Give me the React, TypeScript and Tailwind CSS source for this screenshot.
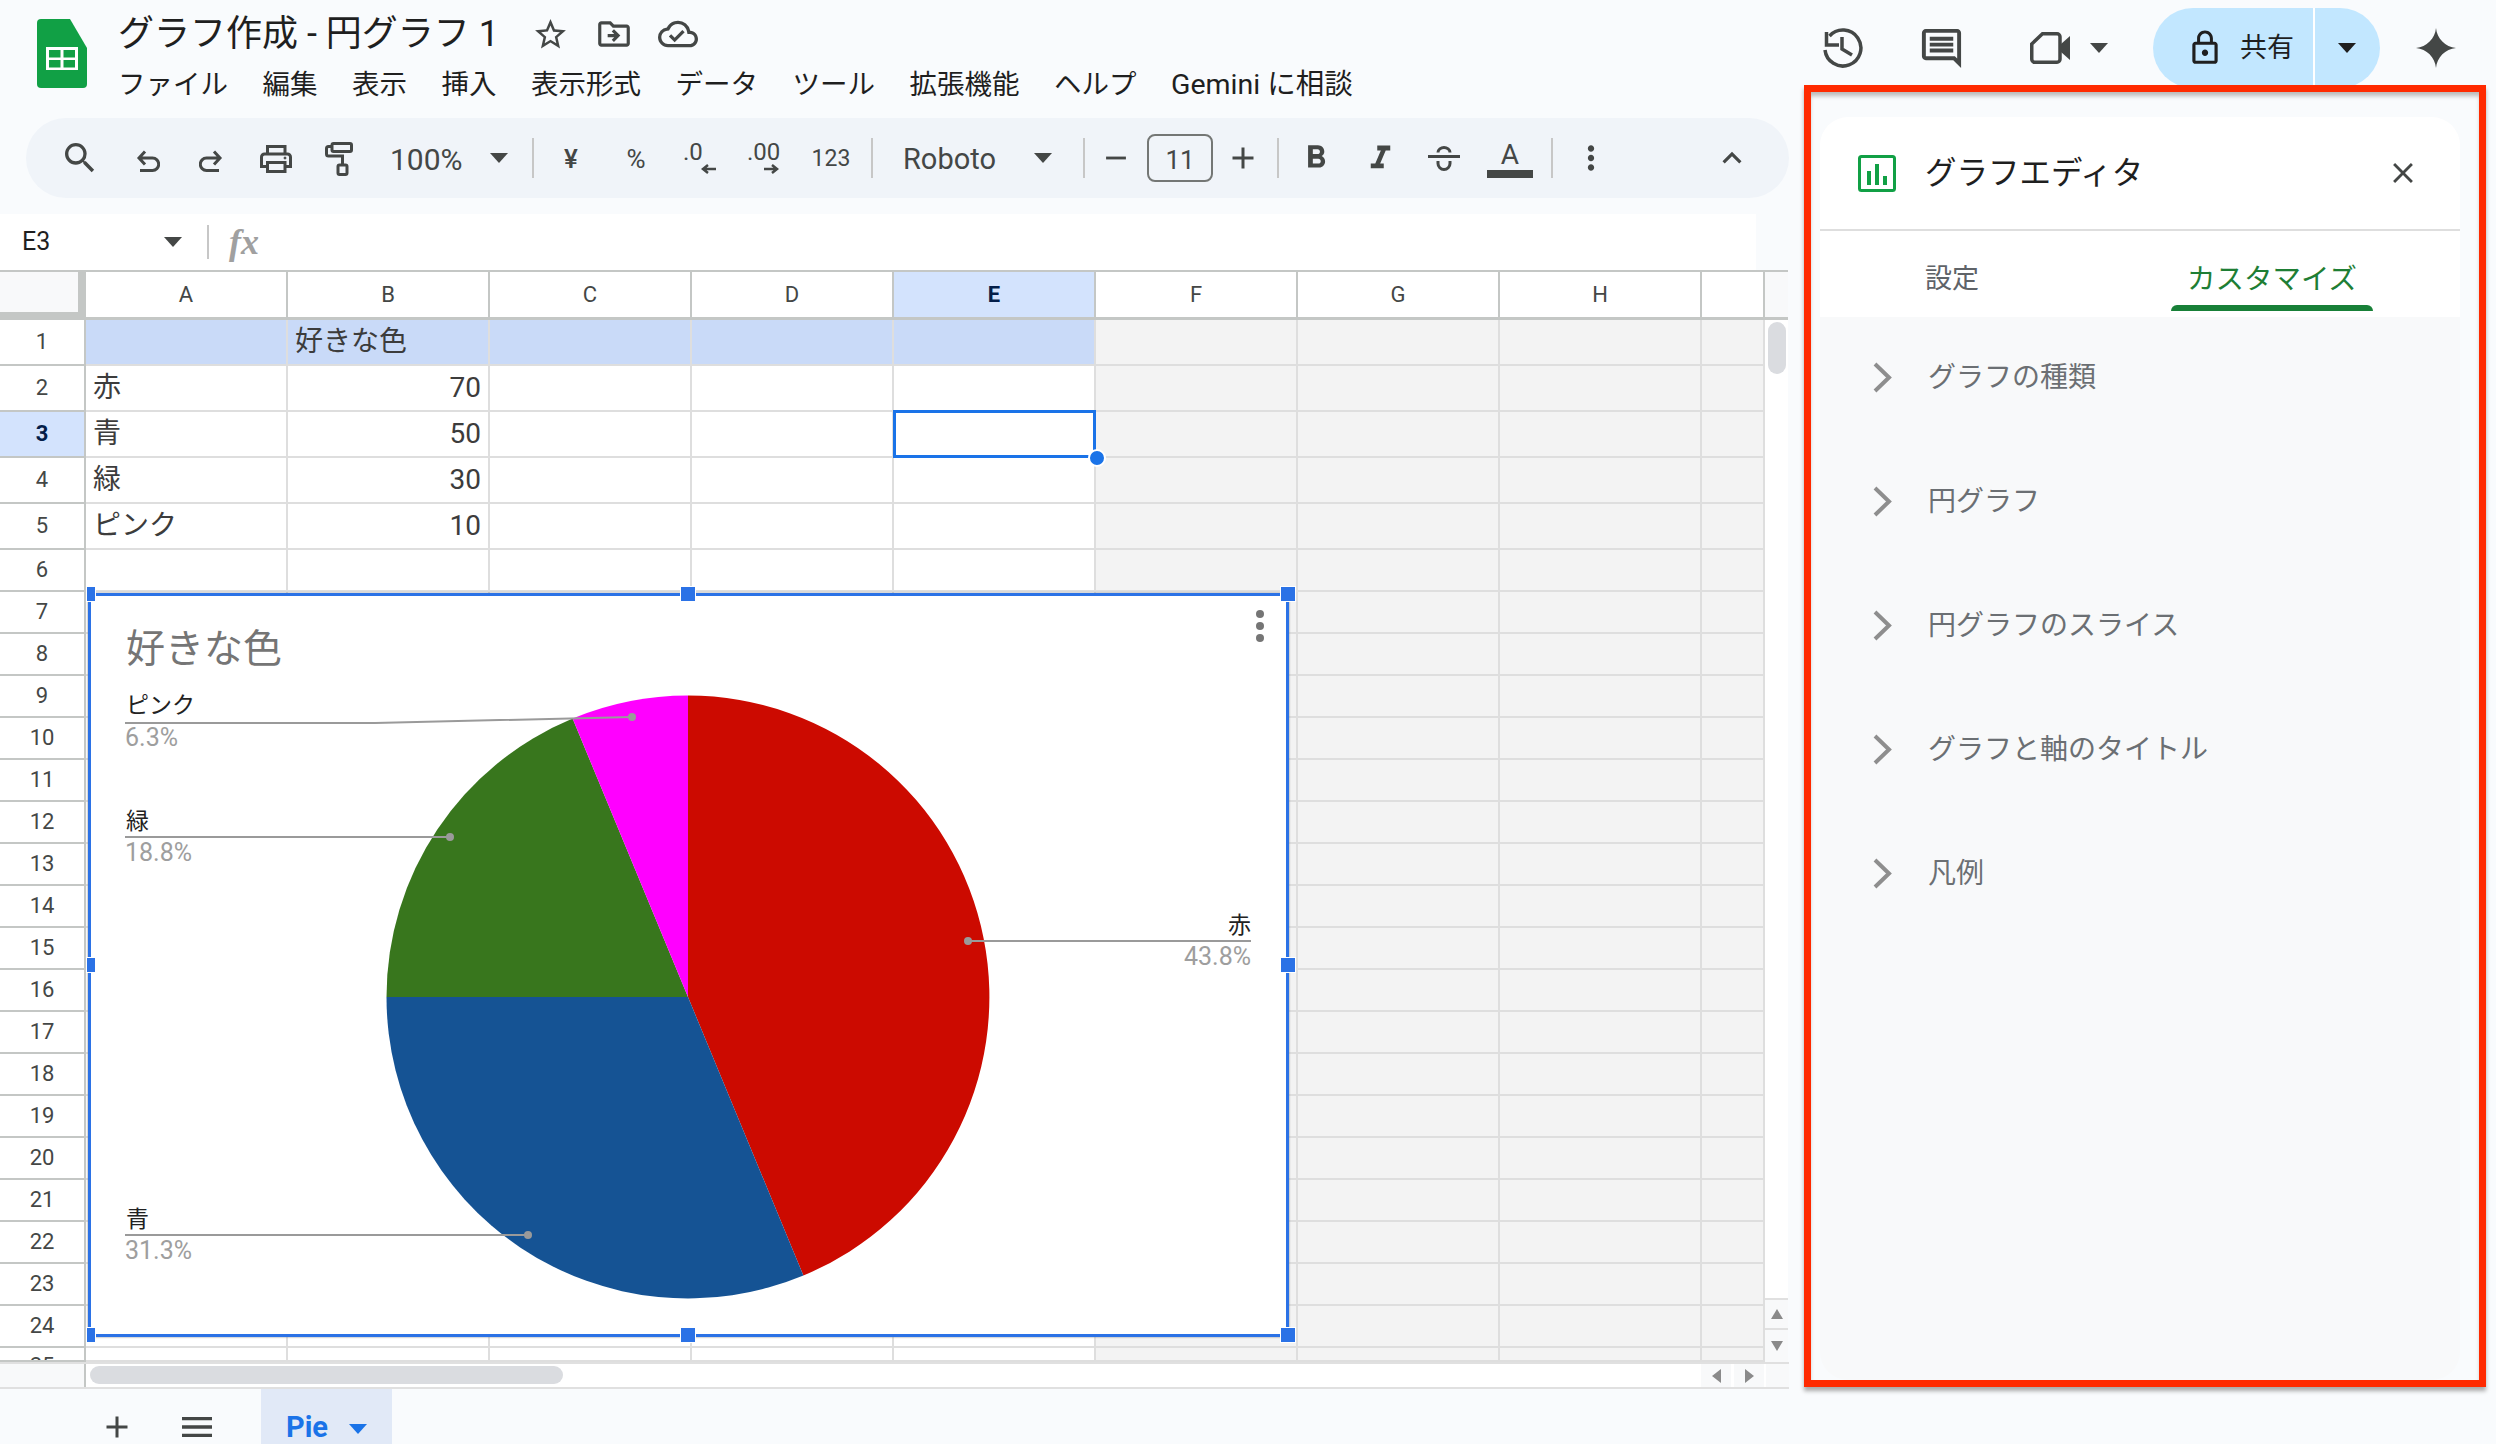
import React from "react";
import {
  MdAdd,
  MdClose,
  MdFormatBold,
  MdFormatItalic,
  MdKeyboardArrowUp,
  MdLockOutline,
  MdMenu,
  MdMoreVert,
  MdOutlineCloudDone,
  MdOutlineComment,
  MdOutlineDriveFileMove,
  MdRemove,
  MdSearch,
  MdStarBorder,
} from "react-icons/md";

const menuItems = ["ファイル", "編集", "表示", "挿入", "表示形式", "データ", "ツール", "拡張機能", "ヘルプ", "Gemini に相談"];
const columns = ["A", "B", "C", "D", "E", "F", "G", "H", ""];
const accordion = ["グラフの種類", "円グラフ", "円グラフのスライス", "グラフと軸のタイトル", "凡例"];

// row number, height class, cell text by column
const rows = [
  ...[1, 2, 3, 4, 5].map((n) => ({ n, h: "h-[46px]" })),
  ...Array.from({ length: 19 }, (_, i) => ({ n: i + 6, h: "h-[42px]" })),
  { n: 25, h: "h-[14px]" },
];

const cellText: Record<string, string> = {
  "1-1": "好きな色",
  "2-0": "赤",
  "2-1": "70",
  "3-0": "青",
  "3-1": "50",
  "4-0": "緑",
  "4-1": "30",
  "5-0": "ピンク",
  "5-1": "10",
};

const Caret = ({ color = "#444746" }: { color?: string }) => (
  <svg width="18" height="10" viewBox="0 0 18 10">
    <path d="M0 0h18L9 10z" fill={color} />
  </svg>
);

const Sep = () => <div className="h-[40px] w-[2px] bg-[#c7c7c7]" />;

const Logo = () => (
  <svg width="50" height="69" viewBox="0 0 50 69">
    <path d="M4 0H33L50 29V65a4 4 0 0 1-4 4H4a4 4 0 0 1-4-4V4a4 4 0 0 1 4-4z" fill="#11a045" />
    <rect x="9" y="28" width="32" height="23" fill="#fff" />
    <rect x="12" y="31" width="11.5" height="7.5" fill="#11a045" />
    <rect x="26.5" y="31" width="11.5" height="7.5" fill="#11a045" />
    <rect x="12" y="41" width="11.5" height="7.5" fill="#11a045" />
    <rect x="26.5" y="41" width="11.5" height="7.5" fill="#11a045" />
  </svg>
);

const Arrow = ({ left }: { left?: boolean }) => (
  <svg width="15" height="10" viewBox="0 0 15 10">
    {left ? (
      <path d="M15 5H3M7 1L2 5l5 4" fill="none" stroke="#444746" strokeWidth="2.5" />
    ) : (
      <path d="M0 5h12M8 1l5 4-5 4" fill="none" stroke="#444746" strokeWidth="2.5" />
    )}
  </svg>
);

const Toolbar = () => (
  <div className="ml-[26px] flex h-[80px] w-[1763px] items-center rounded-full bg-[#f0f4f9] pl-[21px] text-[#444746]">
    <div className="flex w-[66px] justify-center"><MdSearch size={40} /></div>
    <div className="flex w-[70px] justify-center pt-[6px]">
      <svg width="24" height="22" viewBox="0 0 24 22" fill="none" stroke="#444746" strokeWidth="3">
        <path d="M9 1.5L3 8l6 6.5M3 8H16.5a6.2 6.2 0 0 1 0 12.4H4" />
      </svg>
    </div>
    <div className="flex w-[56px] justify-center pt-[6px]">
      <svg width="24" height="22" viewBox="0 0 24 22" fill="none" stroke="#444746" strokeWidth="3">
        <path d="M15 1.5L21 8l-6 6.5M21 8H7.5a6.2 6.2 0 0 0 0 12.4H20" />
      </svg>
    </div>
    <div className="flex w-[74px] justify-center pt-[2px]">
      <svg width="32" height="28" viewBox="0 0 32 28" fill="none" stroke="#444746" strokeWidth="3">
        <path d="M7.5 9V1.5H25V9M7 21.5H1.5V12a3 3 0 0 1 3-3h23a3 3 0 0 1 3 3v9.5H25" />
        <rect x="7.5" y="17.5" width="17.5" height="9" />
        <circle cx="25" cy="13" r="1" fill="#444746" strokeWidth="1" />
      </svg>
    </div>
    <div className="flex w-[52px] justify-center pt-[2px]">
      <svg width="28" height="34" viewBox="0 0 28 34" fill="none" stroke="#444746" strokeWidth="3">
        <rect x="7" y="1.5" width="19.5" height="8" rx="1.5" />
        <path d="M7 4.5H3.5a2 2 0 0 0-2 2V12a2 2 0 0 0 2 2H17.5V23" />
        <rect x="13" y="23" width="9" height="9.5" rx="1.5" />
      </svg>
    </div>
    <span className="ml-[25px] w-[73px] pt-[3px] text-[30px]">100%</span>
    <div className="ml-[21px] flex w-[30px] justify-center"><Caret /></div>
    <div className="ml-[18px]"><Sep /></div>
    <div className="w-[74px] pt-[2px] text-center text-[26px] font-medium">¥</div>
    <div className="w-[56px] pt-[2px] text-center text-[26px]">%</div>
    <div className="flex w-[72px] flex-col pl-[19px] text-[24px] leading-[18px]">
      <span>.0</span>
      <div className="ml-[18px] mt-[3px] flex"><Arrow left /></div>
    </div>
    <div className="flex w-[58px] flex-col pl-[11px] text-[24px] leading-[18px]">
      <span>.00</span>
      <div className="ml-[17px] mt-[3px] flex"><Arrow /></div>
    </div>
    <div className="w-[74px] pt-[2px] text-center text-[23px]">123</div>
    <div className="ml-[3px]"><Sep /></div>
    <span className="ml-[30px] w-[93px] pt-[4px] text-[29px]">Roboto</span>
    <div className="ml-[32px] flex w-[30px] justify-center"><Caret /></div>
    <div className="ml-[25px]"><Sep /></div>
    <div className="flex w-[62px] justify-center"><MdRemove size={34} /></div>
    <div className="flex h-[48px] w-[66px] items-center justify-center rounded-[8px] border-2 border-[#747775] pt-[4px] text-[26px]">11</div>
    <div className="flex w-[60px] justify-center"><MdAdd size={36} /></div>
    <div className="ml-[4px]"><Sep /></div>
    <div className="flex w-[74px] justify-center"><MdFormatBold size={38} /></div>
    <div className="flex w-[54px] justify-center"><MdFormatItalic size={39} /></div>
    <div className="flex w-[74px] justify-center">
      <svg width="32" height="25" viewBox="0 0 32 25" fill="none" stroke="#444746" strokeWidth="3">
        <path d="M0 10.5H32" />
        <path d="M10 6.5C10 3.5 13 1.5 16 1.5S22 3.5 22 6.5M10 15v2.5a6 6 0 0 0 12 0V15" />
      </svg>
    </div>
    <div className="flex w-[58px] flex-col items-center pt-[5px]">
      <span className="text-[28px] leading-[24px]">A</span>
      <div className="mt-[3px] h-[8px] w-[46px] bg-[#444746]" />
    </div>
    <div className="ml-[12px]"><Sep /></div>
    <div className="flex w-[76px] justify-center"><MdMoreVert size={38} /></div>
    <div className="ml-[83px] flex w-[40px] justify-center"><MdKeyboardArrowUp size={38} /></div>
  </div>
);

const Grid = () => (
  <div className="relative h-[1090px] w-[1788px]">
    <div className="grid grid-cols-[86px_repeat(8,202px)_63px_23px]">
      {/* header row */}
      <div className="h-[48px] border-r-[8px] border-b-[8px] border-[#c4c7c5] bg-[#f8f9fa]" />
      {columns.map((c, i) => (
        <div
          key={i}
          className={`flex h-[48px] items-center justify-center border-r-2 border-b-[3px] border-[#c4c7c5] text-[22px] ${
            c === "E" ? "bg-[#d3e3fd] font-bold text-[#041e49]" : "bg-white text-[#444746]"
          }`}
        >
          {c}
        </div>
      ))}
      <div className="h-[48px] border-b-[3px] border-[#c4c7c5] bg-[#f8f9fa]" />
      {rows.map((r) => (
        <React.Fragment key={r.n}>
          <div
            className={`flex ${r.h} justify-center overflow-hidden border-r-2 border-b-2 border-[#c4c7c5] text-[22px] ${
              r.n === 25 ? "items-start pt-[7px] leading-[22px]" : "items-center pb-[2px]"
            } ${r.n === 3 ? "bg-[#d3e3fd] font-bold text-[#041e49]" : "bg-white text-[#444746]"}`}
          >
            {r.n}
          </div>
          {columns.map((_, i) => {
            const shaded = i > 4;
            const text = cellText[`${r.n}-${i}`];
            const right = text && /^\d+$/.test(text);
            return (
              <div
                key={i}
                className={`flex ${r.h} items-center overflow-hidden border-r-2 border-b-2 border-[#dedede] px-[7px] text-[28px] text-[#3c3c3c] ${
                  right ? "justify-end" : ""
                } ${r.n === 1 && i < 5 ? "bg-[#c9daf8]" : shaded ? "bg-[#f3f3f3]" : "bg-white"}`}
              >
                {text}
              </div>
            );
          })}
          <div className={`${r.h} bg-white`} />
        </React.Fragment>
      ))}
    </div>

    {/* selected cell */}
    <div className="absolute left-[893px] top-[138px] h-[48px] w-[203px] border-[3px] border-[#1a73e8]" />
    <div className="absolute left-[1088px] top-[177px] h-[18px] w-[18px] rounded-full border-2 border-white bg-[#1a73e8]" />

    {/* vertical scrollbar */}
    <div className="absolute left-[1768px] top-[50px] h-[52px] w-[18px] rounded-full bg-[#dadce0]" />
    <div className="absolute left-[1765px] top-[1026px] flex h-[64px] w-[23px] flex-col bg-[#f8f9fa]">
      <div className="flex h-[32px] items-center justify-center border-y-2 border-[#e0e0e0]">
        <svg width="12" height="10" viewBox="0 0 12 10"><path d="M6 0l6 10H0z" fill="#8a8a8a" /></svg>
      </div>
      <div className="flex h-[32px] items-center justify-center">
        <svg width="12" height="10" viewBox="0 0 12 10"><path d="M0 0h12L6 10z" fill="#8a8a8a" /></svg>
      </div>
    </div>

    <Chart />
  </div>
);

const Handle = ({ className }: { className: string }) => (
  <div className={`absolute h-[16px] border border-white bg-[#2b72e6] ${className}`} />
);

const Chart = () => (
  <div className="absolute left-[88px] top-[321px] h-[744px] w-[1201px] bg-white">
    <svg width="1201" height="744" viewBox="88 593 1201 744" className="absolute inset-0">
      <path d="M688 997V695.5A301.5 301.5 0 0 1 803.4 1275.5z" fill="#cc0a00" />
      <path d="M688 997L803.4 1275.5A301.5 301.5 0 0 1 386.5 997z" fill="#155394" />
      <path d="M688 997H386.5A301.5 301.5 0 0 1 572.6 718.5z" fill="#38761d" />
      <path d="M688 997L572.6 718.5A301.5 301.5 0 0 1 688 695.5z" fill="#ff00ff" />
      <g fill="none" stroke="#9a9a9a" strokeWidth="2">
        <path d="M125 723H375L632 717" />
        <path d="M125 837H450" />
        <path d="M968 941H1251" />
        <path d="M125 1235H528" />
      </g>
      <g fill="#9a9a9a">
        <circle cx="632" cy="717" r="4" />
        <circle cx="450" cy="837" r="4" />
        <circle cx="968" cy="941" r="4" />
        <circle cx="528" cy="1235" r="4" />
      </g>
      <g fill="#757575">
        <circle cx="1260" cy="614" r="4" />
        <circle cx="1260" cy="626" r="4" />
        <circle cx="1260" cy="638" r="4" />
      </g>
    </svg>

    <span className="absolute left-[38px] top-[56px] -translate-y-1/2 text-[39px] leading-none text-[#757575]">好きな色</span>
    <span className="absolute left-[38px] top-[112px] -translate-y-1/2 text-[23px] leading-none text-[#222]">ピンク</span>
    <span className="absolute left-[37px] top-[144px] -translate-y-1/2 text-[25px] leading-none text-[#9e9e9e]">6.3%</span>
    <span className="absolute left-[38px] top-[228px] -translate-y-1/2 text-[23px] leading-none text-[#222]">緑</span>
    <span className="absolute left-[37px] top-[259px] -translate-y-1/2 text-[25px] leading-none text-[#9e9e9e]">18.8%</span>
    <span className="absolute right-[38px] top-[332px] -translate-y-1/2 text-[23px] leading-none text-[#222]">赤</span>
    <span className="absolute right-[38px] top-[363px] -translate-y-1/2 text-[25px] leading-none text-[#9e9e9e]">43.8%</span>
    <span className="absolute left-[38px] top-[626px] -translate-y-1/2 text-[23px] leading-none text-[#222]">青</span>
    <span className="absolute left-[37px] top-[657px] -translate-y-1/2 text-[25px] leading-none text-[#9e9e9e]">31.3%</span>

    <div className="absolute inset-0 border-[3px] border-[#2b72e6] shadow-[0_0_2px_#888]" />
    <Handle className="left-[-2px] top-[-7px] w-[10px]" />
    <Handle className="left-[592px] top-[-7px] w-[16px]" />
    <Handle className="left-[1192px] top-[-7px] w-[16px]" />
    <Handle className="left-[-2px] top-[364px] w-[10px]" />
    <Handle className="left-[1192px] top-[364px] w-[16px]" />
    <Handle className="left-[-2px] top-[734px] w-[10px]" />
    <Handle className="left-[592px] top-[734px] w-[16px]" />
    <Handle className="left-[1192px] top-[734px] w-[16px]" />
  </div>
);

const Editor = () => (
  <div className="ml-[15px] h-[1302px] w-[682px] border-[7px] border-[#ff2a00] bg-[#f9fbfd] pl-[9px] pr-[19px] pt-[25px] shadow-[0_4px_4px_#aaa,inset_0_5px_4px_-1px_#bbb]">
    <div className="flex h-[1263px] flex-col overflow-hidden rounded-[28px] bg-[#f8f9fa]">
      <div className="flex h-[114px] items-center border-b-2 border-[#dedede] bg-white pl-[38px]">
        <svg width="38" height="37" viewBox="0 0 38 37">
          <rect x="1.5" y="1.5" width="35" height="34" rx="2" fill="none" stroke="#11a045" strokeWidth="3" />
          <path d="M9 16h4v14H9zM17 9h4v21h-4zM25 21h4v9h-4z" fill="#11a045" />
        </svg>
        <span className="ml-[29px] pt-[2px] text-[31.5px] text-[#1f1f1f]">グラフエディタ</span>
        <MdClose size={34} className="ml-[243px] text-[#444746]" />
      </div>
      <div className="flex h-[86px] bg-white pl-[105px] pt-[31px]">
        <span className="h-[35px] w-[246px] text-[27px] leading-[35px] text-[#5f6368]">設定</span>
        <div className="flex w-[202px] flex-col items-center">
          <span className="h-[35px] text-[28.5px] leading-[35px] text-[#1e7e34]">カスタマイズ</span>
          <div className="mt-[8px] h-[6px] w-full rounded-t-[6px] bg-[#188038]" />
        </div>
      </div>
      <div className="flex flex-col gap-[8px] pt-[2px]">
        {accordion.map((label) => (
          <div key={label} className="flex h-[116px] items-center pl-[53px]">
            <svg width="19" height="31" viewBox="0 0 19 31">
              <path d="M2 2l14 13.5L2 29" fill="none" stroke="#8e8e8e" strokeWidth="4" />
            </svg>
            <span className="ml-[36px] pt-[2px] text-[28px] text-[#6b6f73]">{label}</span>
          </div>
        ))}
      </div>
    </div>
  </div>
);

const Actions = () => (
  <div className="h-[85px] overflow-hidden">
    <div className="flex h-[96px] items-center text-[#444746]">
      <svg width="40" height="40" viewBox="0 0 40 40" fill="none" stroke="#444746" strokeWidth="3.5" className="ml-[34px]">
        <path d="M6.5 8A18 18 0 1 1 2 22" />
        <path d="M3.5 4V17H16" />
        <path d="M19 9V21L29 27" />
      </svg>
      <MdOutlineComment size={47} className="ml-[55px]" />
      <svg width="40" height="32" viewBox="0 0 40 32" className="ml-[65px]">
        <path d="M12.5 1.75H27a3 3 0 0 1 3 3V27.25a3 3 0 0 1-3 3H4.75a3 3 0 0 1-3-3V12z" fill="none" stroke="#444746" strokeWidth="3.5" />
        <path d="M31 12L40 4V28L31 20z" fill="#444746" />
      </svg>
      <div className="ml-[14px] flex w-[30px] justify-center"><Caret /></div>
      <div className="ml-[39px] flex h-[80px] w-[227px] overflow-hidden rounded-full bg-[#c2e7ff] text-[#1f1f1f]">
        <div className="flex w-[160px] items-center pl-[33px]">
          <MdLockOutline size={38} />
          <span className="ml-[16px] text-[27px]">共有</span>
        </div>
        <div className="w-[2px] bg-white" />
        <div className="flex flex-1 items-center justify-center pr-[2px]"><Caret color="#1f1f1f" /></div>
      </div>
      <svg width="40" height="40" viewBox="0 0 24 24" className="ml-[36px]">
        <path d="M12 0C12.6 6.4 17.6 11.4 24 12 17.6 12.6 12.6 17.6 12 24 11.4 17.6 6.4 12.6 0 12 6.4 11.4 11.4 6.4 12 0z" fill="#444746" />
      </svg>
    </div>
  </div>
);

export default function App() {
  return (
    <div className="flex h-[1444px] w-[2496px] overflow-hidden bg-[#f9fbfd] font-['Roboto','Noto_Sans_CJK_JP',sans-serif] text-[#1f1f1f]">
      <div className="flex w-[1789px] flex-col">
        {/* title + menu */}
        <div className="flex h-[118px]">
          <div className="ml-[37px] mt-[19px]"><Logo /></div>
          <div className="ml-[31px]">
            <div className="flex h-[68px] items-center">
              <span className="text-[36px]">グラフ作成 - 円グラフ 1</span>
              <MdStarBorder size={37} className="ml-[33px] text-[#444746]" />
              <MdOutlineDriveFileMove size={38} className="ml-[26px] text-[#444746]" />
              <MdOutlineCloudDone size={40} className="ml-[25px] text-[#444746]" />
            </div>
            <div className="flex h-[34px] items-center gap-[34.5px] text-[27.5px]">
              {menuItems.map((m) => (
                <span key={m} className={`whitespace-nowrap ${m.startsWith("Gemini") ? "text-[28.5px]" : ""}`}>{m}</span>
              ))}
            </div>
          </div>
        </div>

        <Toolbar />

        {/* name box + formula bar */}
        <div className="mt-[16px] flex h-[56px] w-[1756px] items-center bg-white">
          <span className="ml-[22px] w-[136px] text-[25px]">E3</span>
          <div className="flex w-[30px] justify-center"><Caret /></div>
          <div className="ml-[19px] h-[34px] w-[2px] bg-[#c7c7c7]" />
          <span className="ml-[20px] font-['Liberation_Serif',serif] text-[36px] font-bold italic text-[#a0a0a0]">fx</span>
        </div>

        <div className="h-[2px] w-[1788px] bg-[#c4c7c5]" />
        <Grid />

        {/* horizontal scrollbar */}
        <div className="flex h-[27px] border-t-2 border-b-2 border-[#e0e0e0] bg-white">
          <div className="w-[86px] border-r-2 border-[#c4c7c5] bg-[#f8f9fa]" />
          <div className="ml-[4px] mt-[2px] h-[18px] w-[475px] rounded-full bg-[#dadce0]" />
          <div className="ml-[1138px] flex w-[30px] items-center justify-center bg-[#f8f9fa]">
            <svg width="9" height="14" viewBox="0 0 9 14"><path d="M9 0v14L0 7z" fill="#8a8a8a" /></svg>
          </div>
          <div className="ml-[3px] flex w-[30px] items-center justify-center bg-[#f8f9fa]">
            <svg width="9" height="14" viewBox="0 0 9 14"><path d="M0 0v14l9-7z" fill="#8a8a8a" /></svg>
          </div>
          <div className="ml-[2px] w-[23px] bg-[#f8f9fa]" />
        </div>

        {/* sheet tabs */}
        <div className="flex h-[55px] items-center">
          <MdAdd size={36} className="ml-[99px] mt-[20px] text-[#444746]" />
          <MdMenu size={40} className="ml-[42px] mt-[20px] text-[#444746]" />
          <div className="ml-[44px] flex h-full w-[131px] items-center bg-[#e1e9f7] pl-[25px] pt-[22px]">
            <span className="text-[29px] font-bold text-[#1a73e8]">Pie</span>
            <div className="ml-[21px] mt-[2px]"><Caret color="#1a73e8" /></div>
          </div>
        </div>
      </div>

      <div className="w-[707px]">
        <Actions />
        <Editor />
      </div>
    </div>
  );
}
